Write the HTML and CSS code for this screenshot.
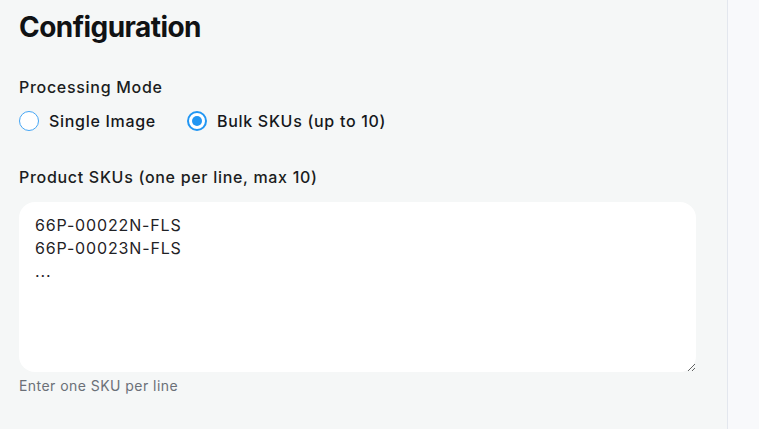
FILE: index.html
```html
<!DOCTYPE html>
<html lang="en">
<head>
<meta charset="utf-8">
<title>Configuration</title>
<link rel="stylesheet" href="styles.css">
</head>
<body>
<div class="layout">
  <section class="config">
    <h2 class="title">Configuration</h2>
    <div class="field">
      <div class="label">Processing Mode</div>
      <div class="radios">
        <label class="radio"><span class="dot"></span><span>Single Image</span></label>
        <label class="radio checked"><span class="dot"></span><span>Bulk SKUs (up to 10)</span></label>
      </div>
    </div>
    <div class="field skus">
      <label class="label" for="skus">Product SKUs (one per line, max 10)</label>
      <textarea id="skus" class="textarea">66P-00022N-FLS
66P-00023N-FLS
...</textarea>
      <div class="help">Enter one SKU per line</div>
    </div>
  </section>
  <aside class="side"></aside>
</div>
</body>
</html>
```
FILE: styles.css
```css
* { box-sizing: border-box; }
html, body { margin: 0; height: 100%; }
body {
  font-family: Inter, "Noto Sans", sans-serif;
  color: #16181c;
  background: #f5f7f7;
}
.layout {
  display: flex;
  height: 429px;
  overflow: hidden;
}
.config {
  flex: 0 0 727px;
  padding: 9px 31px 0 19px;
  background: #f5f7f7;
}
.side {
  flex: 1;
  background: #f8f9fb;
  border-left: 1px solid #e3e7ee;
}
.title {
  margin: 0;
  font-size: 28px;
  line-height: 36px;
  font-weight: 700;
  letter-spacing: -0.55px;
  color: #101214;
}
.field { margin-top: 30px; }
.label {
  display: block;
  font-size: 16px;
  line-height: 24px;
  font-weight: 500;
  letter-spacing: 0.7px;
  color: #1b1d21;
}
.radios {
  display: flex;
  gap: 31px;
  margin-top: 10px;
}
.radio {
  display: flex;
  align-items: center;
  gap: 10px;
  font-size: 16px;
  line-height: 24px;
  font-weight: 500;
  letter-spacing: 0.7px;
  color: #16181c;
}
.dot {
  width: 20px;
  height: 20px;
  border-radius: 50%;
  border: 1.5px solid #45a6f5;
  background: #fff;
  display: flex;
  align-items: center;
  justify-content: center;
}
.checked .dot { border: 2px solid #2196f3; }
.checked .dot::after {
  content: "";
  width: 10px;
  height: 10px;
  border-radius: 50%;
  background: #2196f3;
}
.skus { margin-top: 32px; }
.textarea {
  display: block;
  width: 677px;
  height: 170px;
  margin-top: 13px;
  padding: 12px 16px;
  border: none;
  border-radius: 16px;
  background: #fff;
  font-family: Inter, "Noto Sans", sans-serif;
  font-size: 16px;
  line-height: 23px;
  letter-spacing: 0.85px;
  color: #1f2226;
  resize: vertical;
  outline: none;
}
.help {
  margin-top: 4px;
  font-size: 14px;
  line-height: 20px;
  letter-spacing: 0.45px;
  color: #6b7078;
}
```
